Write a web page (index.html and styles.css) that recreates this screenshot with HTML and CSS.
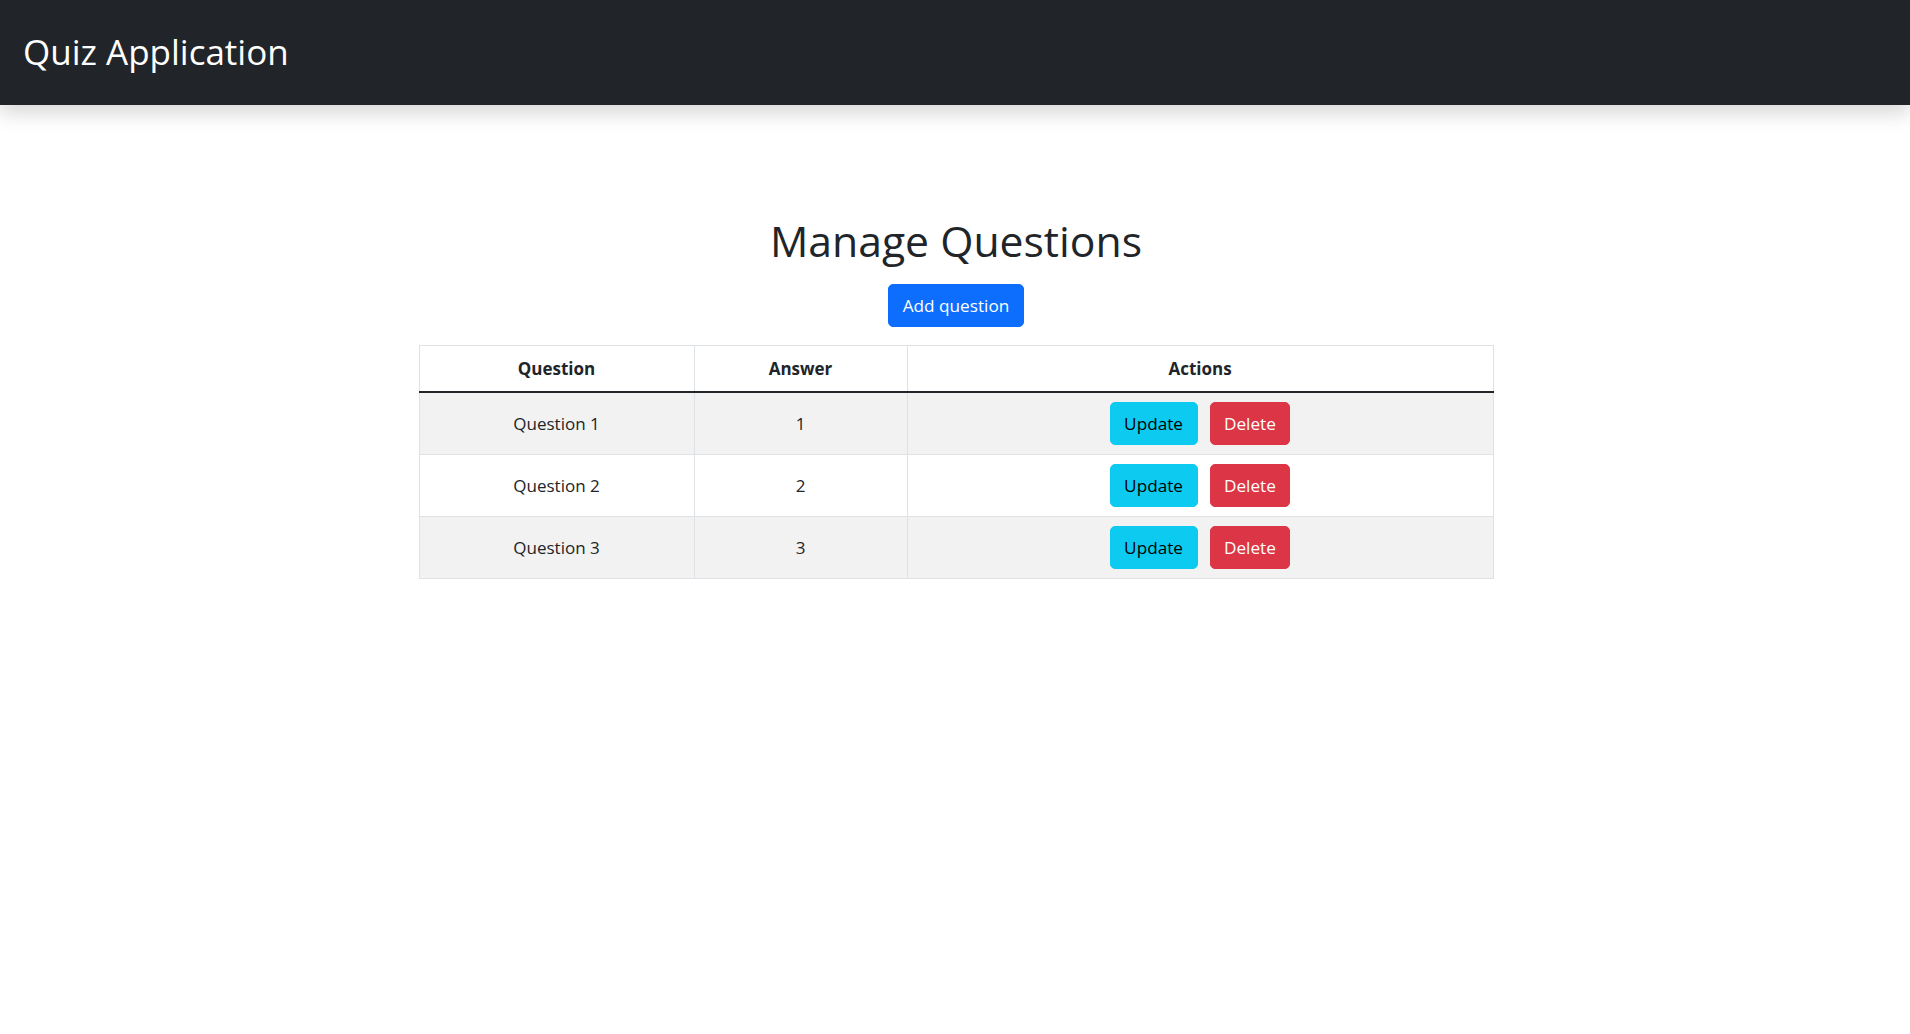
FILE: index.html
```html
<!DOCTYPE html>
<html lang="en">
<head>
<meta charset="utf-8">
<title>Quiz Application</title>
<link rel="stylesheet" href="styles.css">
</head>
<body>
<header class="navbar">
  <span class="brand">Quiz Application</span>
</header>
<main class="page">
  <h1 class="title">Manage Questions</h1>
  <button class="btn btn-primary add-btn" type="button">Add question</button>
  <table class="qtable">
    <colgroup>
      <col class="col-q">
      <col class="col-a">
      <col class="col-act">
    </colgroup>
    <thead>
      <tr>
        <th>Question</th>
        <th>Answer</th>
        <th>Actions</th>
      </tr>
    </thead>
    <tbody>
      <tr class="odd">
        <td>Question 1</td>
        <td>1</td>
        <td><div class="actions"><button class="btn btn-info" type="button">Update</button><button class="btn btn-danger" type="button">Delete</button></div></td>
      </tr>
      <tr>
        <td>Question 2</td>
        <td>2</td>
        <td><div class="actions"><button class="btn btn-info" type="button">Update</button><button class="btn btn-danger" type="button">Delete</button></div></td>
      </tr>
      <tr class="odd">
        <td>Question 3</td>
        <td>3</td>
        <td><div class="actions"><button class="btn btn-info" type="button">Update</button><button class="btn btn-danger" type="button">Delete</button></div></td>
      </tr>
    </tbody>
  </table>
</main>
</body>
</html>
```
FILE: styles.css
```css
html, body {
  margin: 0;
  padding: 0;
  background: #ffffff;
}

body {
  font-family: "Open Sans", "Noto Sans", "Liberation Sans", sans-serif;
  font-size: 17px;
  color: #212529;
}

.navbar {
  position: relative;
  z-index: 2;
  height: 105px;
  background: #212529;
  display: flex;
  align-items: center;
  padding: 0 23px;
  box-shadow: 0 9px 18px rgba(0, 0, 0, 0.15);
}

.brand {
  color: #ffffff;
  font-size: 35px;
  line-height: 1.2;
  padding-bottom: 2px;
}

.page {
  display: flex;
  flex-direction: column;
  align-items: center;
  padding-top: 109px;
  padding-left: 2px;
}

.title {
  margin: 0;
  font-size: 42.7px;
  font-weight: 400;
  line-height: 54px;
}

.btn {
  font-family: inherit;
  font-size: 17.2px;
  line-height: 27px;
  padding: 7px 13.5px;
  border: 1px solid transparent;
  border-radius: 5px;
  cursor: pointer;
}

.btn-primary {
  background: #0d6efd;
  border-color: #0d6efd;
  color: #ffffff;
}

.btn-info {
  background: #0dcaf0;
  border-color: #0dcaf0;
  color: #000000;
}

.btn-danger {
  background: #dc3545;
  border-color: #dc3545;
  color: #ffffff;
}

.add-btn {
  margin-top: 16px;
}

.qtable {
  margin-top: 18px;
  width: 1074px;
  border-collapse: collapse;
  table-layout: fixed;
}

.col-q { width: 275px; }
.col-a { width: 213px; }
.col-act { width: 586px; }

.qtable th,
.qtable td {
  border: 1px solid #dee2e6;
  padding: 9px;
  text-align: center;
  vertical-align: middle;
  line-height: 27px;
}

.qtable th {
  font-weight: 700;
}

.qtable thead th {
  border-bottom: 2px solid #212529;
}

.qtable tr.odd td {
  background: #f2f2f2;
}

.actions {
  display: flex;
  justify-content: center;
  gap: 12px;
}
```
